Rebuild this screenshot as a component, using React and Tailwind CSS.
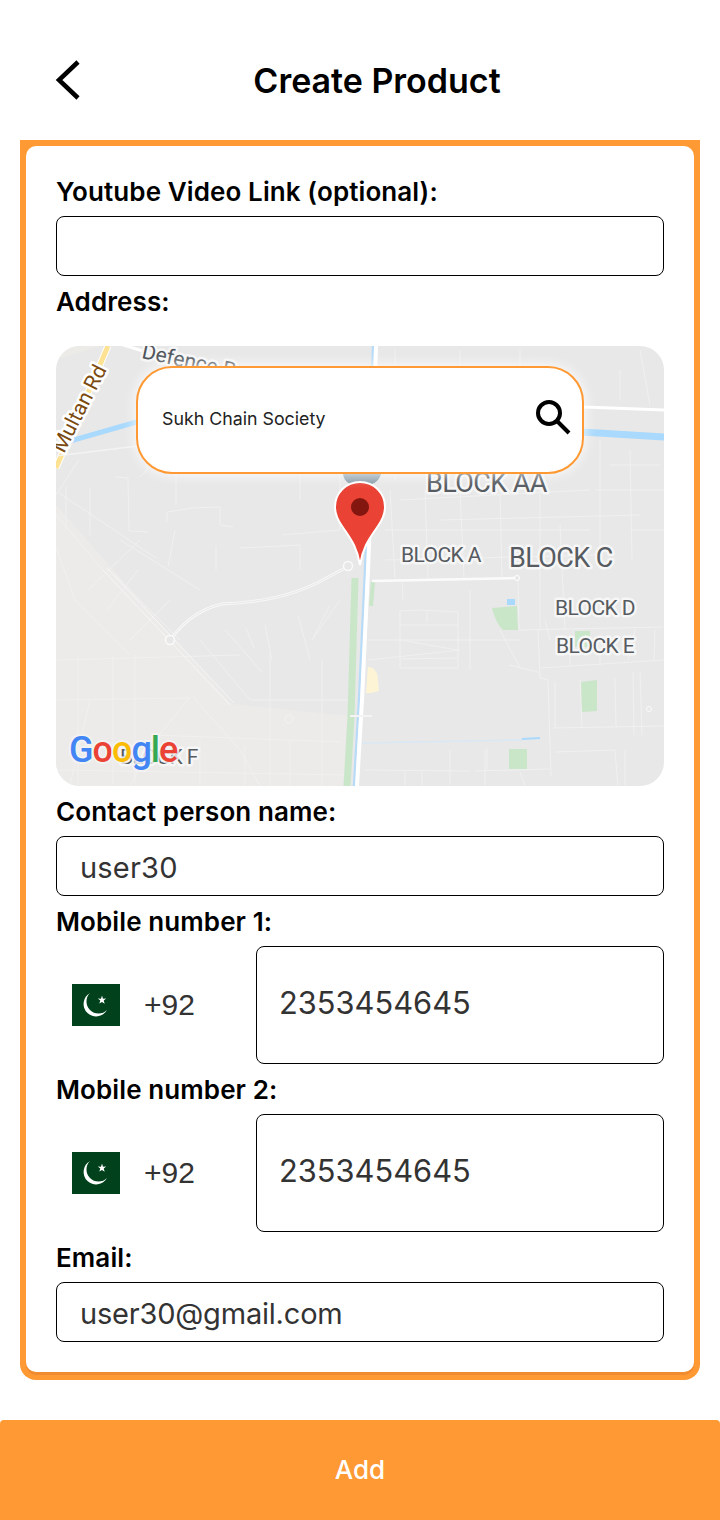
const FONT = "[font-family:Inter,sans-serif]";

const thinRoads = [
  "M115 477L128 478L129 531L148 532",
  "M79 460L56 495",
  "M59 493L156 558",
  "M167 522L167 512L193 508L220 507L220 525L233 527",
  "M175 530L168 567",
  "M56 515L103 570",
  "M120 540L200 590",
  "M140 477L147 470L147 420",
  "M176 474L176 505",
  "M66 486L66 530",
  "M90 488L90 535",
  "M56 547L75 600L130 655",
  "M88 590L140 540",
  "M107 610L138 570",
  "M115 575L180 640",
  "M130 640L170 600",
  "M200 640L250 700L350 700",
  "M225 630L262 672",
  "M246 628L254 648",
  "M265 625L272 660",
  "M298 615L310 660",
  "M330 605L312 640L340 600",
  "M56 660L240 655",
  "M135 655L135 785",
  "M78 655L78 786",
  "M113 655L113 785",
  "M56 700L190 698",
  "M90 700L70 785",
  "M190 697L155 740L130 786",
  "M193 697L240 750L260 786",
  "M155 735L340 742",
  "M56 770L350 775",
  "M245 745L245 786",
  "M290 740L290 786",
  "M322 660L322 786",
  "M270 652L270 786",
  "M200 740L200 786",
  "M216 570L216 546",
  "M240 548L300 545L300 570",
  "M282 535L340 530",
  "M300 500L300 445",
  "M330 470L340 460L340 530",
  "M395 350L395 480",
  "M460 350L460 400",
  "M520 350L520 400",
  "M620 370L620 400",
  "M640 350L650 405",
  "M600 440L600 570",
  "M630 450L632 560",
  "M610 465L660 465",
  "M595 490L664 490",
  "M630 530L664 530",
  "M400 500L590 490",
  "M440 520L640 515",
  "M385 530L590 530",
  "M385 560L600 555",
  "M425 490L428 578",
  "M460 490L464 578",
  "M500 490L502 578",
  "M390 490L395 578",
  "M540 490L540 630",
  "M560 525L565 630",
  "M402 581L403 600",
  "M420 610L458 612L458 668L400 668L400 611Z",
  "M400 625L458 625M400 640L458 650M400 659L458 658",
  "M427 611L427 622",
  "M368 640L520 640",
  "M368 660L460 650",
  "M470 590L470 670",
  "M500 630L520 668",
  "M519 630L663 627",
  "M518 580L519 630",
  "M538 630L540 678L548 680L551 776",
  "M509 665L538 672",
  "M553 728L664 726",
  "M555 682L555 728",
  "M580 680L582 728",
  "M615 678L616 726",
  "M633 672L634 735",
  "M640 672L642 735",
  "M655 630L654 660",
  "M635 630L628 660",
  "M570 635L570 665",
  "M600 635L600 665",
  "M540 668L664 660",
  "M555 752L615 750L618 786",
  "M625 750L625 786",
  "M485 750L485 786",
  "M487 748L487 769",
  "M475 771L550 769",
  "M365 770L470 771",
  "M450 750L450 785",
  "M405 770L405 786",
  "M422 770L422 786",
  "M520 772L525 786",
  "M545 620L550 640",
];

function MapDrawing() {
  const halo = { stroke: "#f6f6f6", strokeWidth: 5, paintOrder: "stroke", strokeLinejoin: "round" };
  const label = { fontFamily: "Roboto, sans-serif", fill: "#565b61", letterSpacing: "-0.6", ...halo };
  return (
    <svg viewBox="56 346 608 440" className="block h-full w-full">
      <rect x="56" y="346" width="608" height="440" fill="#e8e8e8" />
      <path d="M56 505L232 704L350 716L343 786L56 786Z" fill="#ecebe9" />
      <path d="M56 360L56 346L100 346Z" fill="#ecebe8" />
      <path d={thinRoads.join(" ")} fill="none" stroke="#f0f0f0" strokeWidth="1" />

      <path d="M108 346L56 468" fill="none" stroke="#ffffff" strokeWidth="7" />
      <path d="M108 346L56 468" fill="none" stroke="#fde293" strokeWidth="5" />
      <path d="M120 344L198 368" stroke="#ffffff" strokeWidth="3" />
      <path d="M584 407L664 410" stroke="#ffffff" strokeWidth="3" />
      <path d="M56 456L138 446" stroke="#f3f3f3" strokeWidth="1.5" />
      <path d="M56 445L140 421" stroke="#a9d9fc" strokeWidth="5" />
      <path d="M582 432L664 437" stroke="#a9d9fc" strokeWidth="7" />

      <path d="M103 570L230 705M107 568L234 703" fill="none" stroke="#f6f6f6" strokeWidth="1" />
      <path d="M170 640C180 627 195 610 222 604C262 602 290 596 317 583L347 567" fill="none" stroke="#f8f8f8" strokeWidth="3" />
      <path d="M170 640C180 627 195 610 222 604C262 602 290 596 317 583L347 567" fill="none" stroke="#e8e8e8" strokeWidth="1" />
      <circle cx="170" cy="640" r="4.5" fill="#e8e8e8" stroke="#fafafa" strokeWidth="1.5" />
      <circle cx="348" cy="566" r="4.5" fill="#e8e8e8" stroke="#fafafa" strokeWidth="1.5" />
      <circle cx="649" cy="709" r="2.5" fill="none" stroke="#fafafa" />
      <circle cx="289" cy="719" r="4" fill="none" stroke="#f2f2f2" />

      <path d="M355 578L351 716L347 786" fill="none" stroke="#c9e6c9" strokeWidth="7" />
      <path d="M373 582L371 606" fill="none" stroke="#c9e6c9" strokeWidth="4" />
      <path d="M373 346L369 470L365 570L359 700L354 786" fill="none" stroke="#b8dcf8" strokeWidth="2.5" />
      <path d="M376 346L372 470L368 570L362 700L357 786" fill="none" stroke="#ffffff" strokeWidth="4" />
      <path d="M372 581L517 578" stroke="#fbfbfb" strokeWidth="2.5" />
      <circle cx="517" cy="578" r="2.5" fill="#e8e8e8" stroke="#ffffff" />
      <path d="M350 716L372 716" stroke="#f4f4f4" strokeWidth="2" />
      <path d="M362 743L522 740" stroke="#d8e8f5" strokeWidth="1.5" />
      <path d="M522 739L540 738" stroke="#a9d9fc" strokeWidth="2" />
      <path d="M368 667C374 667 378 672 378 680L379 691L371 693L366 693Z" fill="#fdf4d6" />

      <path d="M492 608L517 606L518 630L503 630C497 624 494 616 492 608Z" fill="#c9e6c9" />
      <rect x="507" y="599" width="8" height="6" fill="#a9d9fc" />
      <rect x="575" y="631" width="15" height="16" fill="#c9e6c9" />
      <path d="M581 682L597 680L597 711L582 712Z" fill="#c9e6c9" />
      <rect x="509" y="749" width="18" height="20" fill="#c9e6c9" />

      <text transform="translate(141 358) rotate(12)" fontSize="21" {...label} fill="#4f555c" letterSpacing="0">Defence R</text>
      <text transform="translate(64 454) rotate(-63)" fontSize="21" fontFamily="Roboto, sans-serif" fill="#7b4a12" stroke="#ffffff" strokeWidth="5" paintOrder="stroke" strokeLinejoin="round">Multan Rd</text>
      <text x="426" y="492" fontSize="27" {...label}>BLOCK AA</text>
      <text x="401" y="562" fontSize="21" {...label}>BLOCK A</text>
      <text x="509" y="567" fontSize="27" {...label}>BLOCK C</text>
      <text x="555" y="615" fontSize="21" {...label}>BLOCK D</text>
      <text x="556" y="653" fontSize="21" {...label}>BLOCK E</text>
      <text x="120" y="764" fontSize="21" {...label}>BLOCK F</text>

      <text x="69" y="762" fontSize="36" fontWeight="500" fontFamily="Roboto, sans-serif" stroke="#f4f4f4" strokeOpacity="0.85" strokeWidth="4" paintOrder="stroke" strokeLinejoin="round" letterSpacing="-1">
        <tspan fill="#4285f4">G</tspan>
        <tspan fill="#ea4335">o</tspan>
        <tspan fill="#fbbc05">o</tspan>
        <tspan fill="#4285f4">g</tspan>
        <tspan fill="#34a853">l</tspan>
        <tspan fill="#ea4335">e</tspan>
      </text>

      <path d="M343 474C344 482 350 486 361 486C372 486 379 482 381 474Z" fill="#8ea1ac" />
      <path d="M360 565C357 546 350 538 342 526C337 519 335 514 335 507C335 493 346 482 360 482C374 482 385 493 385 507C385 514 383 519 378 526C370 538 363 546 360 565Z" fill="#ea4335" stroke="#ffffff" strokeWidth="2" />
      <circle cx="360" cy="507" r="9" fill="#841610" />
    </svg>
  );
}

function Flag() {
  return (
    <svg width="48" height="42" viewBox="0 0 48 42" className="shrink-0">
      <rect width="48" height="42" fill="#01411c" />
      <path d="M18 9A12.5 12.5 0 1 0 35 26A11 11 0 0 1 18 9Z" fill="#ffffff" />
      <path d="M30 11.5L31 14.8L34.2 14.6L31.7 16.6L32.7 19.8L30 18L27.3 19.6L28.3 16.6L25.8 14.6L29 14.8Z" fill="#ffffff" />
    </svg>
  );
}

function Label({ children, className = "" }) {
  return <div className={`mt-[10px] mb-2 h-8 text-[26px] leading-8 font-semibold text-black tracking-[0.1px] ${className}`}>{children}</div>;
}

function TextBox({ value, className = "" }) {
  return (
    <div className={`flex h-[60px] items-center rounded-lg border border-black bg-white pl-[23px] pt-1 text-[29px] text-[#333333] ${className}`}>
      {value}
    </div>
  );
}

function PhoneRow() {
  return (
    <div className="flex h-[118px] items-center">
      <div className="flex w-[200px] shrink-0 items-center pl-4">
        <Flag />
        <span className="ml-6 mt-[-1px] text-[30px] text-[#333333] [font-family:'Liberation_Sans',sans-serif]">+92</span>
      </div>
      <div className="flex h-full flex-1 items-center rounded-lg border border-black pb-[3px] pl-[22px] text-[30.8px] text-[#333333]">2353454645</div>
    </div>
  );
}

export default function App() {
  return (
    <div className={`h-[1520px] w-[720px] overflow-hidden bg-white ${FONT}`}>
      <header className="relative flex h-[140px] items-center justify-center pl-[34px] pt-5">
        <svg width="30" height="46" viewBox="0 0 30 46" className="absolute left-[53px] top-[57px]" fill="none">
          <path d="M25 5L6 23L25 41" stroke="#000000" strokeWidth="4.5" />
        </svg>
        <h1 className="text-[34px] font-semibold text-black">Create Product</h1>
      </header>

      <main className="mx-5 rounded-b-[16px] bg-[#ff9933] px-[6px] pt-[6px] pb-2">
        <div className="rounded-[10px] bg-white px-[30px] pt-5 pb-[30px] shadow-[0_3px_0_#f08b30]">
          <Label>Youtube Video Link (optional):</Label>
          <TextBox value="" />
          <Label>Address:</Label>
          <div className="relative mt-7 h-[440px] overflow-hidden rounded-[24px]">
            <MapDrawing />
            <div className="absolute left-20 top-5 flex h-[108px] w-[448px] items-center justify-between rounded-[36px] border-2 border-[#ff9933] bg-white pl-6 pr-[9px] shadow-[0_0_14px_rgba(255,255,255,0.95)]">
              <span className="mt-[-1px] text-[17.8px] text-[#222222]">Sukh Chain Society</span>
              <svg width="40" height="40" viewBox="0 0 40 40" fill="none" className="mb-[7px]">
                <circle cx="16" cy="16" r="11" stroke="#000000" strokeWidth="4" />
                <path d="M24 24L36 36" stroke="#000000" strokeWidth="4" />
              </svg>
            </div>
          </div>
          <Label>Contact person name:</Label>
          <TextBox value="user30" className="tracking-[0.2px]" />
          <Label>Mobile number 1:</Label>
          <PhoneRow />
          <Label>Mobile number 2:</Label>
          <PhoneRow />
          <Label>Email:</Label>
          <TextBox value="user30@gmail.com" className="tracking-[-0.2px]" />
        </div>
      </main>

      <button className={`mt-10 block h-[100px] w-full rounded-t-[4px] bg-[#ff9933] pb-[2px] text-[26px] font-medium text-white ${FONT}`}>Add</button>
    </div>
  );
}
